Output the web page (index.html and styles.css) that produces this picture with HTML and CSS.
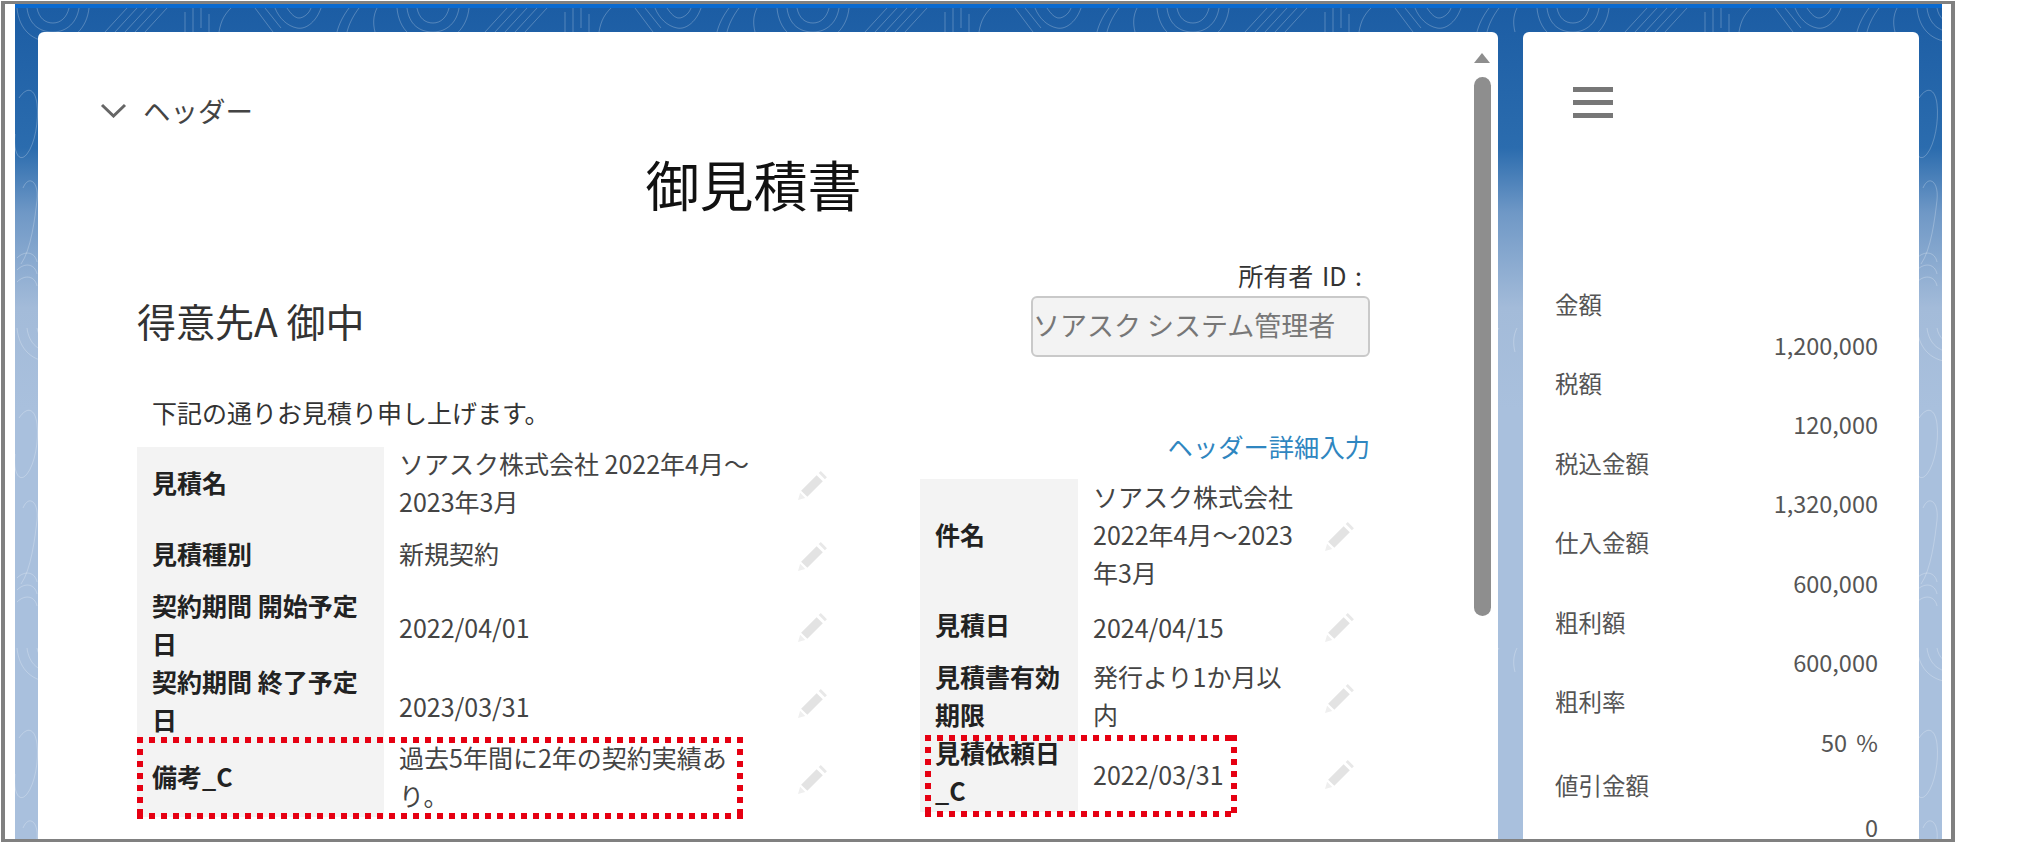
FILE: index.html
```html
<!DOCTYPE html>
<html lang="ja">
<head>
  <meta charset="UTF-8" />
  <title>御見積書</title>
  <link rel="stylesheet" href="styles.css">
</head>
<body>

  <svg class="icon-defs" width="0" height="0">
    <symbol id="pencil" viewBox="0 0 30 30">
      <path d="M1 29l2-7 5 5z" fill="#efefef"/>
      <path d="M4 20L19 5l6 6-15 15z" fill="#e3e3e3"/>
      <path d="M21 3l2-2 6 6-2 2z" fill="#e8e8e8"/>
    </symbol>
  </svg>

  <div class="frame">
    <div class="desk">

      <!-- Contour lines on the page background -->
      <svg class="contours" width="100%" height="100%">
        <defs>
          <pattern id="contour" width="380" height="320" patternUnits="userSpaceOnUse">
            <g fill="none" stroke="#fff" stroke-opacity="0.24" stroke-width="1">
              <path d="M12 0c2 16 12 24 26 24s24-10 26-24"/>
              <path d="M22 0c2 10 8 15 16 15s14-6 16-15"/>
              <path d="M2 0c2 22 16 34 36 34S72 20 74 0"/>
              <path d="M90 24L112 0M100 24L122 0M110 24L132 0M120 24L142 0M130 24L152 0"/>
              <path d="M170 24V4M178 24V0M186 20V0M194 24V6M204 24C206 12 210 6 216 0"/>
              <path d="M240 0l18 24M250 0l16 20M260 0c4 10 12 18 22 20s20-8 24-20M272 0c4 6 8 10 12 10s10-4 12-10"/>
              <path d="M322 24c2-8 6-16 12-24M332 24c2-8 6-16 12-24M360 24c-2-8-2-16 2-24"/>
              <path d="M4 90c8-12 16-10 18 6s-2 40-10 50-14-2-12-20"/>
              <path d="M8 180c6-14 16-6 14 12s-6 50-16 64"/>
              <path d="M2 250c8-8 18-6 20 4M2 262c8-8 18-6 20 4M2 274c8-8 18-6 20 4"/>
            </g>
          </pattern>
        </defs>
        <rect width="100%" height="100%" fill="url(#contour)"/>
      </svg>

      <div class="card card-main">
        <div class="card-body">
          <div class="section-head">
            <svg class="chevron" width="27" height="15" viewBox="0 0 27 15">
              <polyline points="2,2 13.5,13 25,2" fill="none" stroke="#666" stroke-width="3"/>
            </svg>
            <span>ヘッダー</span>
          </div>

          <div class="quote-body">
            <h1 class="quote-title">御見積書</h1>

            <div class="addressee-row">
              <div class="customer">得意先A 御中</div>
              <div class="owner">
                <div class="owner-label">所有者 ID :</div>
                <div class="owner-input">ソアスク システム管理者</div>
              </div>
            </div>

            <div class="detail-row">
              <div class="detail-left">
                <p class="greeting">下記の通りお見積り申し上げます。</p>
                <div class="table-wrap">
                  <table class="detail-table table-left">
                    <tr>
                      <th><span class="lift">見積名</span></th>
                      <td><span class="lift">ソアスク株式会社 2022年4月～2023年3月</span></td>
                      <td class="edit"><svg class="pencil"><use href="#pencil"/></svg></td>
                    </tr>
                    <tr class="row-short">
                      <th><span class="lift">見積種別</span></th>
                      <td><span class="lift">新規契約</span></td>
                      <td class="edit"><svg class="pencil"><use href="#pencil"/></svg></td>
                    </tr>
                    <tr>
                      <th><span class="lift">契約期間 開始予定日</span></th>
                      <td>2022/04/01</td>
                      <td class="edit"><svg class="pencil"><use href="#pencil"/></svg></td>
                    </tr>
                    <tr>
                      <th><span class="lift">契約期間 終了予定日</span></th>
                      <td><span class="drop">2023/03/31</span></td>
                      <td class="edit"><svg class="pencil"><use href="#pencil"/></svg></td>
                    </tr>
                    <tr>
                      <th><span class="lift">備考_C</span></th>
                      <td><span class="lift">過去5年間に2年の契約実績あり。</span></td>
                      <td class="edit"><svg class="pencil"><use href="#pencil"/></svg></td>
                    </tr>
                  </table>
                  <div class="callout callout-left"></div>
                </div>
              </div>

              <div class="detail-right">
                <a class="detail-link">ヘッダー詳細入力</a>
                <div class="table-wrap">
                  <table class="detail-table table-right">
                    <tr class="row-tall">
                      <th><span class="lift">件名</span></th>
                      <td><span class="lift">ソアスク株式会社 2022年4月～2023年3月</span></td>
                      <td class="edit"><svg class="pencil"><use href="#pencil"/></svg></td>
                    </tr>
                    <tr class="row-short">
                      <th><span class="lift">見積日</span></th>
                      <td>2024/04/15</td>
                      <td class="edit"><svg class="pencil"><use href="#pencil"/></svg></td>
                    </tr>
                    <tr>
                      <th><span class="lift">見積書有効期限</span></th>
                      <td><span class="lift">発行より1か月以内</span></td>
                      <td class="edit"><svg class="pencil"><use href="#pencil"/></svg></td>
                    </tr>
                    <tr>
                      <th><span class="lift">見積依頼日_C</span></th>
                      <td>2022/03/31</td>
                      <td class="edit"><svg class="pencil"><use href="#pencil"/></svg></td>
                    </tr>
                  </table>
                  <div class="callout callout-right"></div>
                </div>
              </div>
            </div>
          </div>
        </div>

        <div class="scrollbar">
          <div class="scroll-arrow"></div>
          <div class="scroll-thumb"></div>
        </div>
      </div>

      <div class="card card-side">
        <div class="menu-icon"><span></span><span></span><span></span></div>
        <dl class="totals">
          <dt>金額</dt><dd>1,200,000</dd>
          <dt>税額</dt><dd>120,000</dd>
          <dt>税込金額</dt><dd>1,320,000</dd>
          <dt>仕入金額</dt><dd>600,000</dd>
          <dt>粗利額</dt><dd>600,000</dd>
          <dt>粗利率</dt><dd class="percent">50 %</dd>
          <dt class="totals-last">値引金額</dt><dd class="discount">0</dd>
        </dl>
      </div>

    </div>
  </div>

</body>
</html>
```

FILE: styles.css
```css
/* Minimal Reset */
* {
  margin: 0;
  padding: 0;
  box-sizing: border-box;
  font-family: "Noto Sans CJK JP", "Noto Sans", sans-serif;
}

body {
  height: 847px;
  overflow: hidden;
  background: #fff;
}

.icon-defs {
  position: absolute;
}

/* Gray screenshot frame */
.frame {
  width: 1954px;
  height: 841px;
  margin: 1px 0 0 1px;
  border: 4px solid #808080;
  border-width: 3px 4px;
  padding: 0 9px 0 10px;
  background: #fff;
}

/* Blue page behind the cards */
.desk {
  position: relative;
  height: 100%;
  display: flex;
  gap: 25px;
  padding: 24px 23px 0;
  border-top: 4px solid #0a6ad0;
  background: linear-gradient(#1c5da4 0, #2b6cae 140px, #6f98c6 205px, #a3bbd9 300px, #a9c0dd 400px);
}

.contours {
  position: absolute;
  top: 0;
  left: 0;
}

.card {
  position: relative;
  background: #fff;
  border-radius: 6px 6px 0 0;
}

.card-main {
  width: 1460px;
  display: flex;
}

.card-body {
  flex: 1;
  padding-top: 58px;
}

/* Collapsible section title */
.section-head {
  display: flex;
  align-items: center;
  gap: 16px;
  padding-left: 62px;
  font-size: 27.5px;
  line-height: 40px;
  color: #444;
}

.quote-body {
  padding: 0 104px 0 99px;
}

.quote-title {
  height: 70px;
  margin-top: 22px;
  font-size: 54px;
  font-weight: 400;
  line-height: 64px;
  text-align: center;
  color: #111;
}

.addressee-row {
  display: flex;
  justify-content: space-between;
  align-items: flex-end;
  margin-top: 36px;
}

.customer {
  margin-bottom: 12px;
  font-size: 39px;
  line-height: 50px;
  color: #333;
}

.owner-label {
  padding-right: 8px;
  margin-bottom: 4px;
  font-size: 25px;
  line-height: 34px;
  word-spacing: 3px;
  text-align: right;
  color: #333;
}

.owner-input {
  width: 339px;
  height: 61px;
  font-size: 27px;
  line-height: 53px;
  white-space: nowrap;
  color: #777;
  background: #f3f3f3;
  border: 2px solid #c9c9c9;
  border-radius: 6px;
}

.detail-row {
  display: flex;
  justify-content: space-between;
  margin-top: 39px;
}

.greeting {
  height: 38px;
  padding-left: 15px;
  margin-bottom: 13px;
  font-size: 25px;
  line-height: 33px;
  color: #333;
}

.detail-right {
  padding-top: 35px;
  width: 450px;
}

.detail-link {
  display: block;
  height: 38px;
  margin-bottom: 10px;
  font-size: 25.3px;
  line-height: 30px;
  text-align: right;
  color: #2f86c0;
}

/* Label / value tables */
.table-wrap {
  position: relative;
}

.detail-table {
  border-collapse: collapse;
  font-size: 25px;
  line-height: 38px;
}

.detail-table th {
  height: 76px;
  padding: 0 15px;
  text-align: left;
  font-weight: 700;
  color: #222;
  background: #f3f3f3;
}

.detail-table td {
  padding: 0 15px;
  color: #444;
}

/* Japanese lines sit a little higher in the cell than the dates */
.lift {
  display: block;
  margin-top: -6px;
}

.drop {
  display: block;
  margin-top: 6px;
}

.detail-table .row-short th {
  height: 66px;
}

.detail-table .row-tall th {
  height: 115px;
}

.table-left th {
  width: 247px;
}

.table-left td {
  width: 390px;
}

.table-right th {
  width: 158px;
}

.table-right td {
  width: 235px;
}

.detail-table td.edit {
  width: 57px;
  padding: 0 0 0 11px;
}

.table-left td.edit {
  width: 66px;
  padding-left: 23px;
}

.pencil {
  display: block;
  width: 31px;
  height: 31px;
}

/* Red dotted marks drawn over the table rows */
.callout {
  position: absolute;
  height: 82px;
  background:
    linear-gradient(90deg, #e60012 50%, transparent 50%) top left / 12px 6px repeat-x,
    linear-gradient(90deg, #e60012 50%, transparent 50%) bottom left / 12px 6px repeat-x,
    linear-gradient(#e60012 50%, transparent 50%) top left / 6px 12px repeat-y,
    linear-gradient(#e60012 50%, transparent 50%) top right / 6px 12px repeat-y;
}

.callout-left {
  top: 290px;
  left: 0;
  width: 606px;
}

.callout-right {
  top: 256px;
  left: 5px;
  width: 312px;
}

/* Scrollbar of the main card */
.scrollbar {
  width: 17px;
  margin-right: 7px;
  padding-top: 21px;
}

.scroll-arrow {
  width: 0;
  height: 0;
  margin-bottom: 14px;
  border-left: 8.5px solid transparent;
  border-right: 8.5px solid transparent;
  border-bottom: 10px solid #8e8e8e;
}

.scroll-thumb {
  height: 539px;
  background: #8e8e8e;
  border-radius: 9px;
}

/* Side card with totals */
.card-side {
  width: 396px;
  padding: 55px 41px 0 32px;
}

.menu-icon {
  display: flex;
  flex-direction: column;
  gap: 8px;
  width: 40px;
  margin-left: 18px;
}

.menu-icon span {
  height: 5px;
  background: #777;
}

.totals {
  margin-top: 168px;
  font-size: 23.5px;
  color: #555;
}

.totals dt {
  height: 39.7px;
  line-height: 36px;
}

.totals dd {
  height: 39.7px;
  line-height: 39.7px;
  text-align: right;
}

.totals dd.percent {
  word-spacing: 4px;
}

.totals dt.totals-last {
  margin-top: 5px;
}

.totals dd.discount {
  height: 24px;
  margin-top: 8px;
  line-height: 24px;
}
```
